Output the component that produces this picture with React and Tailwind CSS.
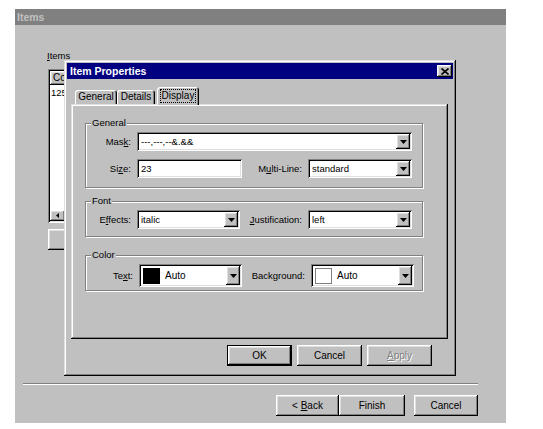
import React from 'react';

// Win95-style bevels
const raised = 'shadow-[inset_-1px_-1px_#000,inset_1px_1px_#fff,inset_-2px_-2px_#808080,inset_2px_2px_#dfdfdf]';
const raisedDefault = 'shadow-[inset_0_0_0_1px_#000,inset_-2px_-2px_#000,inset_2px_2px_#fff,inset_-3px_-3px_#808080,inset_3px_3px_#dfdfdf]';
const sunken = 'shadow-[inset_1px_1px_#808080,inset_-1px_-1px_#fff,inset_2px_2px_#000,inset_-2px_-2px_#dfdfdf]';
const windowFrame = 'shadow-[inset_-1px_-1px_#000,inset_1px_1px_#dfdfdf,inset_-2px_-2px_#808080,inset_2px_2px_#fff]';
const tab = 'flex items-center justify-center rounded-t-[3px] text-[10px] shadow-[inset_1px_1px_#fff,inset_-1px_0_#000,inset_-2px_0_#808080]';

function Key({ children }) {
  return <span className="underline underline-offset-1">{children}</span>;
}

function Button({ w, children, isDefault, disabled, className = '' }) {
  return (
    <div
      className={`${w} h-[21px] flex items-center justify-center bg-[#c0c0c0] ${isDefault ? raisedDefault : raised} ${
        disabled ? 'text-[#808080] [text-shadow:1px_1px_0_#fff]' : ''
      } ${className}`}
    >
      {children}
    </div>
  );
}

function DropArrow() {
  return (
    <div className={`w-[14px] h-full shrink-0 flex items-center justify-center bg-[#c0c0c0] ${raised}`}>
      <svg width="7" height="4" viewBox="0 0 7 4">
        <path d="M0 0h7L3.5 4z" fill="#000" />
      </svg>
    </div>
  );
}

function Combo({ w, h = 'h-[19px]', children }) {
  return (
    <div className={`flex ${w} ${h} bg-white p-[2px] ${sunken}`}>
      <div className="flex-1 flex items-center pl-[2px] overflow-hidden whitespace-nowrap">{children}</div>
      <DropArrow />
    </div>
  );
}

function Group({ title, h, className = '', children }) {
  return (
    <div
      className={`${h} w-[338px] border border-[#808080] shadow-[inset_1px_1px_#fff,1px_1px_#fff] ${className}`}
    >
      <div className="-mt-[7px] ml-[5px] w-fit px-[1px] bg-[#c0c0c0] leading-[12px]">{title}</div>
      {children}
    </div>
  );
}

function Swatch({ color }) {
  return (
    <span
      className={`w-[17px] h-[16px] shrink-0 ${color === 'black' ? 'bg-black' : 'bg-white border border-[#808080]'}`}
    />
  );
}

export default function App() {
  return (
    <div className="w-[543px] h-[429px] bg-white pt-[9px] pl-[15px] font-['Liberation_Sans',Arial,sans-serif] text-[9.5px] text-black leading-[12px]">
      <div className="relative flex flex-col w-[491px] h-[414px] bg-[#c0c0c0]">
        {/* inactive wizard window */}
        <div className="h-[16px] shrink-0 bg-[#808080] pl-[2px] text-[10.5px] font-bold text-[#c0c0c0] leading-[16px]">
          Items
        </div>

        <div className="pl-[32px] pt-[25px]">
          <div>
            <Key>I</Key>tems
          </div>
          <div className={`mt-[7px] ml-[1px] w-[160px] h-[154px] bg-white p-[2px] flex flex-col ${sunken}`}>
            <div className={`h-[14px] w-[60px] pl-[3px] bg-[#c0c0c0] leading-[14px] text-[10px] ${raised}`}>Co</div>
            <div className="flex-1 pt-[2px] pl-[1px]">125</div>
            <div className="h-[11px] flex bg-[#dfdfdf]">
              <div className={`w-[15px] h-full flex items-center justify-center bg-[#c0c0c0] ${raised}`}>
                <svg width="3" height="5" viewBox="0 0 3 5">
                  <path d="M3 0v5L0 2.5z" fill="#000" />
                </svg>
              </div>
            </div>
          </div>
          <Button w="w-[80px]" className="mt-[6px] ml-[1px]" />
        </div>

        <div className="mt-auto h-[40px]">
          <div className="ml-[8px] w-[455px] h-[2px] border-t border-[#808080] border-b border-b-white" />
          <div className="mt-[10px] flex justify-end pr-[28px] text-[10px]">
            <Button w="w-[63px]">
              &lt;&nbsp;<Key>B</Key>ack
            </Button>
            <Button w="w-[66px]">Finish</Button>
            <Button w="w-[64px]" className="ml-[9px]">
              Cancel
            </Button>
          </div>
        </div>

        {/* Item Properties dialog */}
        <div className={`absolute left-[49px] top-[51px] w-[392px] h-[316px] bg-[#c0c0c0] p-[3px] flex flex-col ${windowFrame}`}>
          <div className="h-[16px] shrink-0 bg-[#000080] flex items-center justify-between pl-[3px] pr-[1px]">
            <span className="text-white font-bold text-[10.5px]">Item Properties</span>
            <div className={`w-[15px] h-[12px] flex items-center justify-center bg-[#c0c0c0] ${raised}`}>
              <svg width="8" height="7" viewBox="0 0 8 7">
                <path d="M0.5 0.5L7.5 6.5M7.5 0.5L0.5 6.5" stroke="#000" strokeWidth="1.6" />
              </svg>
            </div>
          </div>

          <div className="mt-[8px] ml-[4px] pl-[4px] h-[17px] flex items-end">
            <div className={`w-[42px] h-[14px] ${tab}`}>General</div>
            <div className={`w-[38px] h-[14px] ${tab}`}>Details</div>
            <div className={`relative z-10 ml-[2px] -mb-[1px] w-[42px] h-[18px] pb-[1px] bg-[#c0c0c0] ${tab}`}>
              <span className="border border-dotted border-black px-[1px] leading-[12px]">Display</span>
            </div>
          </div>

          <div className={`ml-[4px] w-[377px] h-[235px] pt-[19px] pl-[14px] ${windowFrame}`}>
            <Group title="General" h="h-[65px]">
              <div className="mt-[3px] flex items-center">
                <span className="w-[45px] text-right">
                  Mas<Key>k</Key>:
                </span>
                <div className="ml-[6px]">
                  <Combo w="w-[275px]">---,---,--&amp;.&amp;&amp;</Combo>
                </div>
              </div>
              <div className="mt-[8px] flex items-center">
                <span className="w-[45px] text-right">
                  Si<Key>z</Key>e:
                </span>
                <div className={`ml-[6px] w-[105px] h-[19px] bg-white pl-[4px] flex items-center ${sunken}`}>23</div>
                <span className="w-[60px] text-right">
                  M<Key>u</Key>lti-Line:
                </span>
                <div className="ml-[6px]">
                  <Combo w="w-[104px]">standard</Combo>
                </div>
              </div>
            </Group>

            <Group title="Font" h="h-[36px]" className="mt-[13px]">
              <div className="mt-[3px] flex items-center">
                <span className="w-[45px] text-right">
                  E<Key>f</Key>fects:
                </span>
                <div className="ml-[6px]">
                  <Combo w="w-[103px]">italic</Combo>
                </div>
                <span className="w-[62px] text-right">
                  <Key>J</Key>ustification:
                </span>
                <div className="ml-[6px]">
                  <Combo w="w-[104px]">left</Combo>
                </div>
              </div>
            </Group>

            <Group title="Color" h="h-[36px]" className="mt-[18px]">
              <div className="mt-[3px] flex items-center">
                <span className="w-[47px] text-right">
                  Te<Key>x</Key>t:
                </span>
                <div className="ml-[6px]">
                  <Combo w="w-[103px]" h="h-[23px]">
                    <Swatch color="black" />
                    <span className="ml-[5px] text-[10px]">Auto</span>
                  </Combo>
                </div>
                <span className="w-[63px] text-right">Background:</span>
                <div className="ml-[6px]">
                  <Combo w="w-[103px]" h="h-[23px]">
                    <Swatch color="white" />
                    <span className="ml-[5px] text-[10px]">Auto</span>
                  </Combo>
                </div>
              </div>
            </Group>
          </div>

          <div className="mt-[6px] flex justify-end gap-[5px] pr-[21px] text-[10px]">
            <Button w="w-[65px]" isDefault>
              OK
            </Button>
            <Button w="w-[65px]">Cancel</Button>
            <Button w="w-[65px]" disabled>
              <Key>A</Key>pply
            </Button>
          </div>
        </div>
      </div>
    </div>
  );
}
